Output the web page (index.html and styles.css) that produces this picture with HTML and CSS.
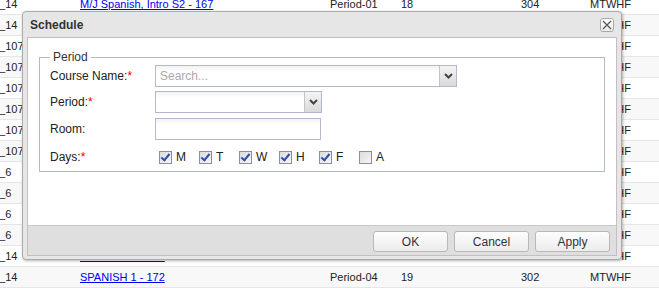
FILE: index.html
```html
<!DOCTYPE html>
<html lang="en">
<head>
    <meta charset="UTF-8">
    <title>Schedule</title>
    <link rel="stylesheet" href="styles.css">
</head>
<body>
    <div class="grid">
        <div class="row"><span class="c1">t_14</span><span class="c2"><a href="#">M/J Spanish, Intro S2 - 167</a></span><span>Period-01</span><span>18</span><span>304</span><span>MTWHF</span></div>
        <div class="row"><span class="c1">t_14</span><span class="c2"><a href="#">SPANISH 1 - 170</a></span><span>Period-02</span><span>22</span><span>302</span><span>MTWHF</span></div>
        <div class="row"><span class="c1">t_107</span><span class="c2"><a href="#">SPANISH 1 - 171</a></span><span>Period-03</span><span>20</span><span>302</span><span>MTWHF</span></div>
        <div class="row"><span class="c1">t_107</span><span class="c2"><a href="#">SPANISH 2 - 173</a></span><span>Period-05</span><span>24</span><span>302</span><span>MTWHF</span></div>
        <div class="row"><span class="c1">t_107</span><span class="c2"><a href="#">SPANISH 2 - 174</a></span><span>Period-06</span><span>21</span><span>302</span><span>MTWHF</span></div>
        <div class="row"><span class="c1">t_107</span><span class="c2"><a href="#">SPANISH 2 - 175</a></span><span>Period-07</span><span>19</span><span>302</span><span>MTWHF</span></div>
        <div class="row"><span class="c1">t_107</span><span class="c2"><a href="#">SPANISH 3 - 176</a></span><span>Period-01</span><span>17</span><span>302</span><span>MTWHF</span></div>
        <div class="row"><span class="c1">t_107</span><span class="c2"><a href="#">SPANISH 3 - 177</a></span><span>Period-02</span><span>16</span><span>302</span><span>MTWHF</span></div>
        <div class="row"><span class="c1">t_6</span><span class="c2"><a href="#">M/J Spanish - 160</a></span><span>Period-03</span><span>23</span><span>304</span><span>MTWHF</span></div>
        <div class="row"><span class="c1">t_6</span><span class="c2"><a href="#">M/J Spanish - 161</a></span><span>Period-04</span><span>25</span><span>304</span><span>MTWHF</span></div>
        <div class="row"><span class="c1">t_6</span><span class="c2"><a href="#">M/J Spanish - 162</a></span><span>Period-05</span><span>22</span><span>304</span><span>MTWHF</span></div>
        <div class="row"><span class="c1">t_6</span><span class="c2"><a href="#">M/J Spanish - 163</a></span><span>Period-06</span><span>18</span><span>304</span><span>MTWHF</span></div>
        <div class="row"><span class="c1">t_14</span><span class="c2"><a href="#">SPANISH 1 - 169</a></span><span>Period-03</span><span>21</span><span>302</span><span>MTWHF</span></div>
        <div class="row"><span class="c1">t_14</span><span class="c2"><a href="#">SPANISH 1 - 172</a></span><span>Period-04</span><span>19</span><span>302</span><span>MTWHF</span></div>
    </div>

    <div class="dialog">
        <div class="dialog-title">
            <span>Schedule</span>
            <button class="close-btn" title="Close">
                <svg width="10" height="10" viewBox="0 0 10 10"><path d="M1 1 L9 9 M9 1 L1 9" stroke="#555" stroke-width="1.2" fill="none"/></svg>
            </button>
        </div>
        <div class="dialog-body">
            <div class="dialog-content">
                <fieldset class="period-set">
                    <legend>Period</legend>
                    <div class="form-row">
                        <label class="lbl">Course Name:<span class="req">*</span></label>
                        <div class="combo combo-wide">
                            <input type="text" placeholder="Search...">
                            <span class="combo-arrow"><svg width="9" height="6" viewBox="0 0 9 6"><path d="M1 1 L4.5 4.5 L8 1" stroke="#444" stroke-width="2" fill="none"/></svg></span>
                        </div>
                    </div>
                    <div class="form-row row-period">
                        <label class="lbl">Period:<span class="req">*</span></label>
                        <div class="combo combo-short">
                            <input type="text">
                            <span class="combo-arrow"><svg width="9" height="6" viewBox="0 0 9 6"><path d="M1 1 L4.5 4.5 L8 1" stroke="#444" stroke-width="2" fill="none"/></svg></span>
                        </div>
                    </div>
                    <div class="form-row row-room">
                        <label class="lbl">Room:</label>
                        <input class="text-input" type="text">
                    </div>
                    <div class="form-row row-days">
                        <label class="lbl">Days:<span class="req">*</span></label>
                        <div class="days">
                            <span class="day"><span class="chk on"></span>M</span>
                            <span class="day"><span class="chk on"></span>T</span>
                            <span class="day"><span class="chk on"></span>W</span>
                            <span class="day"><span class="chk on"></span>H</span>
                            <span class="day"><span class="chk on"></span>F</span>
                            <span class="day"><span class="chk"></span>A</span>
                        </div>
                    </div>
                </fieldset>
            </div>
            <div class="dialog-footer">
                <button class="btn">OK</button>
                <button class="btn">Cancel</button>
                <button class="btn">Apply</button>
            </div>
        </div>
    </div>
</body>
</html>
```

FILE: styles.css
```css
body {
    margin: 0;
    font-family: 'Liberation Sans', Arial, sans-serif;
    font-size: 11px;
    color: #222;
    background: #fff;
    overflow: hidden;
    position: relative;
    height: 288px;
}
.grid {
    margin-top: -6px;
}
.row {
    display: grid;
    grid-template-columns: 80px 250px 71px 120px 69px 69px;
    height: 20px;
    line-height: 21px;
    border-bottom: 1px solid #e6e6e6;
    white-space: nowrap;
}
.row:nth-child(even) {
    background: #f8f8f8;
}
.row span {
    overflow: hidden;
}
.c1 {
    text-indent: -4px;
}
.row a {
    color: #0000ee;
}
.dialog {
    position: absolute;
    left: 22px;
    top: 11px;
    width: 600px;
    height: 249px;
    box-sizing: border-box;
    border: 1px solid #aaa;
    border-radius: 4px;
    background: #e6e6e6;
    box-shadow: 1px 1px 3px rgba(0, 0, 0, 0.3);
    display: flex;
    flex-direction: column;
    padding: 0 4px 3px 4px;
    font-size: 12px;
}
.dialog-title {
    height: 25px;
    flex: none;
    display: flex;
    align-items: center;
    justify-content: space-between;
    padding-left: 3px;
    font-weight: bold;
    color: #333;
}
.close-btn {
    width: 14px;
    height: 14px;
    padding: 0;
    margin-right: 3px;
    border: 1px solid #a8a8a8;
    border-radius: 3px;
    background: linear-gradient(#fff, #ececec);
    display: flex;
    align-items: center;
    justify-content: center;
}
.dialog-body {
    flex: 1;
    border: 1px solid #c9bdbd;
    display: flex;
    flex-direction: column;
}
.dialog-content {
    flex: 1;
    background: #fff;
    border-bottom: 1px solid #c8c8c8;
}
.period-set {
    margin: 12px 11px 0;
    padding: 1px 10px 3px;
    border: 1px solid #b4b7c9;
}
.period-set legend {
    padding: 0 3px;
    margin-left: 0;
    color: #333;
}
.form-row {
    display: flex;
    align-items: center;
    height: 22px;
}
.row-period {
    margin-top: 4px;
}
.row-room {
    margin-top: 5px;
}
.row-days {
    margin-top: 6px;
}
.lbl {
    width: 105px;
    color: #222;
}
.req {
    color: #e00;
}
.combo {
    display: flex;
    box-sizing: border-box;
    height: 22px;
    border: 1px solid #b5b8c8;
    background: #fff;
}
.combo input {
    flex: 1;
    width: 0;
    min-width: 0;
    border: none;
    outline: none;
    padding: 0 4px;
    font-family: inherit;
    font-size: 12px;
    background: linear-gradient(#f2f2f2, #fff 6px);
}
.combo input::placeholder {
    color: #aaa;
}
.combo-wide {
    width: 302px;
}
.combo-short {
    width: 167px;
}
.combo-arrow {
    width: 16px;
    flex: none;
    border-left: 1px solid #c4c4c4;
    background: linear-gradient(#f4f4f4, #d9d9d9);
    display: flex;
    align-items: center;
    justify-content: center;
}
.text-input {
    box-sizing: border-box;
    height: 22px;
    width: 166px;
    border: 1px solid #b5b8c8;
    outline: none;
    background: linear-gradient(#f2f2f2, #fff 6px);
}
.days {
    display: flex;
    padding-left: 4px;
}
.day {
    width: 40px;
    display: flex;
    align-items: center;
    gap: 4px;
}
.chk {
    width: 11px;
    height: 11px;
    border: 1px solid #8e8f8f;
    background: linear-gradient(135deg, #dcdcdc, #f6f6f6);
    position: relative;
}
.chk.on::after {
    content: '';
    position: absolute;
    left: 3px;
    top: 0px;
    width: 3px;
    height: 7px;
    border: solid #2a4fb3;
    border-width: 0 2px 2px 0;
    transform: rotate(40deg);
}
.dialog-footer {
    height: 29px;
    flex: none;
    background: #dfdfdf;
    display: flex;
    justify-content: flex-end;
    align-items: flex-start;
    padding: 5px 6px 0 0;
    box-sizing: border-box;
    gap: 6px;
}
.btn {
    width: 75px;
    height: 21px;
    border: 1px solid #b8b8b8;
    border-radius: 3px;
    background: linear-gradient(#fdfdfd, #ececec);
    font-family: inherit;
    font-size: 12px;
    color: #333;
}
```
